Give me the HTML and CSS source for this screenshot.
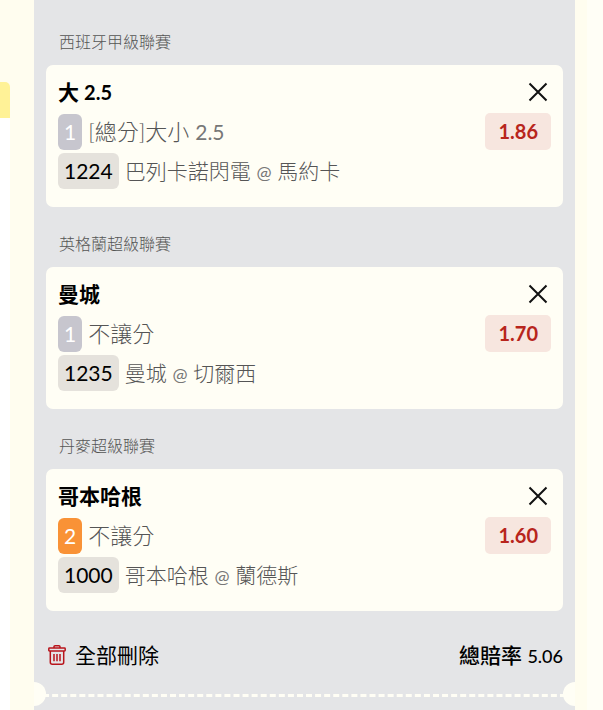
FILE: index.html
```
<!DOCTYPE html>
<html lang="zh-Hant">

<head>
    <meta charset="UTF-8">
    <meta name="viewport" content="width=device-width, initial-scale=1.0">
    <title>投注單</title>
    <link rel="stylesheet" href="styles.css">
</head>

<body>
    <div class="page">
        <aside class="board">
            <div class="board-top"></div>
            <div class="board-tab"></div>
            <div class="board-list"></div>
        </aside>

        <main class="slip">
            <section class="league">
                <h2 class="league-name">西班牙甲級聯賽</h2>
                <article class="card">
                    <div class="info">
                        <h3 class="pick">大 <span class="num">2.5</span></h3>
                        <div class="row play"><span class="badge">1</span><span>[總分]大小 <span class="line">2.5</span></span></div>
                        <div class="row"><span class="code">1224</span><span>巴列卡諾閃電 <span class="at">@</span> 馬約卡</span></div>
                    </div>
                    <div class="side">
                        <button type="button" class="close" aria-label="刪除">
                            <svg width="20" height="20" viewBox="0 0 20 20"><path d="M1.5 1.5l17 17M18.5 1.5l-17 17"/></svg>
                        </button>
                        <span class="odds">1.86</span>
                    </div>
                </article>
            </section>

            <section class="league">
                <h2 class="league-name">英格蘭超級聯賽</h2>
                <article class="card">
                    <div class="info">
                        <h3 class="pick">曼城</h3>
                        <div class="row play"><span class="badge">1</span><span>不讓分</span></div>
                        <div class="row"><span class="code">1235</span><span>曼城 <span class="at">@</span> 切爾西</span></div>
                    </div>
                    <div class="side">
                        <button type="button" class="close" aria-label="刪除">
                            <svg width="20" height="20" viewBox="0 0 20 20"><path d="M1.5 1.5l17 17M18.5 1.5l-17 17"/></svg>
                        </button>
                        <span class="odds">1.70</span>
                    </div>
                </article>
            </section>

            <section class="league">
                <h2 class="league-name">丹麥超級聯賽</h2>
                <article class="card">
                    <div class="info">
                        <h3 class="pick">哥本哈根</h3>
                        <div class="row play"><span class="badge badge-orange">2</span><span>不讓分</span></div>
                        <div class="row"><span class="code">1000</span><span>哥本哈根 <span class="at">@</span> 蘭德斯</span></div>
                    </div>
                    <div class="side">
                        <button type="button" class="close" aria-label="刪除">
                            <svg width="20" height="20" viewBox="0 0 20 20"><path d="M1.5 1.5l17 17M18.5 1.5l-17 17"/></svg>
                        </button>
                        <span class="odds">1.60</span>
                    </div>
                </article>
            </section>

            <div class="summary">
                <button type="button" class="clear">
                    <svg width="18" height="20" viewBox="0 0 18 20">
                        <path d="M6 3V1.8Q6 .8 7 .8h4q1 0 1 1V3M1.5 3h15q.7 0 .7.7v1.6q0 .7-.7.7h-15Q.8 6 .8 5.3V3.7Q.8 3 1.5 3zM2.3 6v11.2q0 2 2 2h9.4q2 0 2-2V6M6 9v7.2M9 9v7.2M12 9v7.2"/>
                    </svg>
                    <span>全部刪除</span>
                </button>
                <p class="total">總賠率 <span class="total-num">5.06</span></p>
            </div>

            <!-- 撕票線 -->
            <div class="tear"></div>
        </main>

        <div class="edge"></div>
    </div>
</body>

</html>
```

FILE: styles.css
```
* {
    box-sizing: border-box;
    margin: 0;
    padding: 0;
}

body {
    background-color: #fffdef;
    font-family: Lato, "Noto Sans CJK TC", sans-serif;
    font-size: 21px;
    color: #000000;
    overflow: hidden;
}

button {
    border: 0;
    background: none;
    font: inherit;
    color: inherit;
    cursor: pointer;
}

svg {
    fill: none;
    display: block;
}

.page {
    display: flex;
    height: 100vh;
}

/* 左側賽事列表 */
.board {
    width: 10px;
    display: flex;
    flex-direction: column;
}

.board-top {
    height: 82px;
}

.board-tab {
    height: 36px;
    background-color: #fff297;
    border-top-right-radius: 5px;
}

.board-list {
    flex: 1;
    background-color: #ffffff;
}

/* 投注單 */
.slip {
    flex: 1;
    margin-left: 24px;
    padding-top: 5px;
    background-color: #e4e5e7;
    overflow: hidden;
}

.edge {
    width: 28px;
    border-left: 12px solid #fffdef;
    background-color: #fffef6;
}

.league {
    padding: 0 12px;
}

.league-name {
    padding: 25px 13px 11px;
    font-size: 16px;
    line-height: 24px;
    font-weight: 300;
    color: #555555;
}

.card {
    display: flex;
    justify-content: space-between;
    padding: 11px 12px 18px;
    border-radius: 7px;
    background-color: #fffef5;
}

.pick {
    margin-bottom: 6px;
    font-size: 21px;
    line-height: 32px;
    font-weight: 700;
}

.num {
    font-size: 20px;
    line-height: 1;
}

.row {
    display: flex;
    gap: 6px;
    line-height: 36px;
    font-weight: 300;
    color: #555555;
}

.play {
    margin-bottom: 3px;
    font-size: 22px;
}

.line {
    font-size: 21px;
    line-height: 1;
    font-weight: 400;
    color: #777777;
}

.at {
    font-size: 18px;
    line-height: 1;
    font-weight: 400;
    color: #777777;
}

.badge,
.code {
    padding: 0 6px;
    border-radius: 6px;
    font-size: 21px;
    font-weight: 400;
}

.badge {
    background-color: #c7c6ce;
    color: #ffffff;
}

.badge-orange {
    background-color: #f99236;
}

.code {
    background-color: #e5e2dc;
    color: #000000;
}

.side {
    display: flex;
    flex-direction: column;
    align-items: flex-end;
    gap: 6px;
}

.close {
    padding: 6px 3px 5px;
}

.close svg {
    stroke: #111111;
    stroke-width: 2;
}

.odds {
    padding: 0 13px;
    border-radius: 5px;
    background-color: #f7e6df;
    color: #b8251c;
    font-size: 20px;
    line-height: 37px;
    font-weight: 700;
}

.summary {
    display: flex;
    justify-content: space-between;
    align-items: center;
    padding: 28px 12px 23px 14px;
    line-height: 32px;
}

.clear {
    display: flex;
    align-items: center;
    gap: 9px;
}

.clear svg {
    stroke: #b8151c;
    stroke-width: 1.5;
}

.total {
    font-weight: 500;
}

.total-num {
    font-size: 18px;
    line-height: 1;
}

.tear {
    position: relative;
    border-top: 3px dashed #fffef5;
}

.tear::before,
.tear::after {
    content: "";
    position: absolute;
    top: -15px;
    width: 24px;
    height: 24px;
    border-radius: 50%;
    background-color: #fffef5;
}

.tear::before {
    left: -12px;
}

.tear::after {
    right: -12px;
}
```
